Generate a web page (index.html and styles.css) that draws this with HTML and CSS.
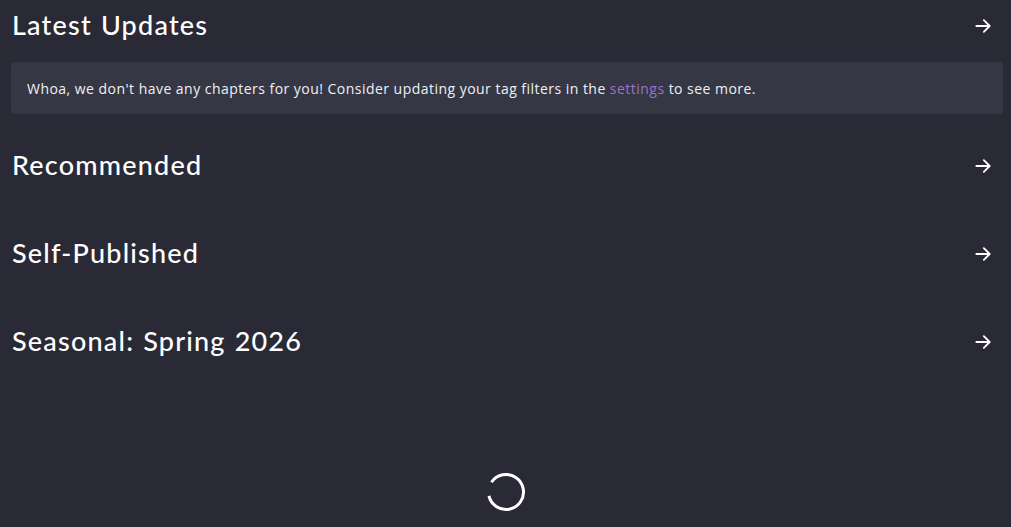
FILE: index.html
```html
<!DOCTYPE html>
<html>
<head>
<meta charset="utf-8">
<link rel="stylesheet" href="styles.css">
</head>
<body>
<main class="page">
  <section class="section">
    <div class="head"><h2 class="title">Latest Updates</h2><a class="arrow"><svg width="20" height="20" viewBox="0 0 24 24" fill="none" stroke="currentColor" stroke-width="2.2" stroke-linecap="round" stroke-linejoin="round"><path d="M4 12h16M13 5l7 7-7 7"/></svg></a></div>
    <div class="content"><div class="card">Whoa, we don't have any chapters for you! Consider updating your tag filters in the <a class="link">settings</a> to see more.</div></div>
  </section>
  <section class="section">
    <div class="head"><h2 class="title">Recommended</h2><a class="arrow"><svg width="20" height="20" viewBox="0 0 24 24" fill="none" stroke="currentColor" stroke-width="2.2" stroke-linecap="round" stroke-linejoin="round"><path d="M4 12h16M13 5l7 7-7 7"/></svg></a></div>
    <div class="content"></div>
  </section>
  <section class="section">
    <div class="head"><h2 class="title">Self-Published</h2><a class="arrow"><svg width="20" height="20" viewBox="0 0 24 24" fill="none" stroke="currentColor" stroke-width="2.2" stroke-linecap="round" stroke-linejoin="round"><path d="M4 12h16M13 5l7 7-7 7"/></svg></a></div>
    <div class="content"></div>
  </section>
  <section class="section">
    <div class="head"><h2 class="title">Seasonal: Spring 2026</h2><a class="arrow"><svg width="20" height="20" viewBox="0 0 24 24" fill="none" stroke="currentColor" stroke-width="2.2" stroke-linecap="round" stroke-linejoin="round"><path d="M4 12h16M13 5l7 7-7 7"/></svg></a></div>
    <div class="content"></div>
  </section>
  <div class="loader"><svg class="spinner" width="40" height="40" viewBox="0 0 40 40"><circle cx="20" cy="20" r="17.5" fill="none" stroke="#ffffff" stroke-width="3" stroke-dasharray="95 15" transform="rotate(214 20 20)"/></svg></div>
</main>
</body>
</html>
```
FILE: styles.css
```css
html, body {
  margin: 0;
  padding: 0;
  background: #292a36;
  color: #ffffff;
  height: 100%;
  overflow: hidden;
}
.page {
  padding: 4px 8px 0 11px;
  display: flex;
  flex-direction: column;
  gap: 30px;
}
.section {
  display: flex;
  flex-direction: column;
}
.head {
  height: 40px;
  display: flex;
  align-items: center;
  justify-content: space-between;
  margin-bottom: 18px;
}
.title {
  margin: 0;
  font-family: "Lato", sans-serif;
  font-weight: 500;
  font-size: 27px;
  letter-spacing: 1.2px;
  word-spacing: 1px;
  padding-left: 1px;
}
.arrow {
  color: #ffffff;
  display: flex;
  margin-right: 10px;
  padding-top: 4px;
}
.card {
  background: #353745;
  border-radius: 4px;
  height: 52px;
  display: flex;
  align-items: center;
  padding: 0 16px;
  font-family: "Open Sans", sans-serif;
  font-size: 14px;
  letter-spacing: 0.47px;
  color: #f0f0f4;
  white-space: pre;
}
.link {
  color: #9d72c2;
}
.loader {
  display: flex;
  justify-content: center;
  margin-top: 64px;
  padding-right: 3px;
}
```
